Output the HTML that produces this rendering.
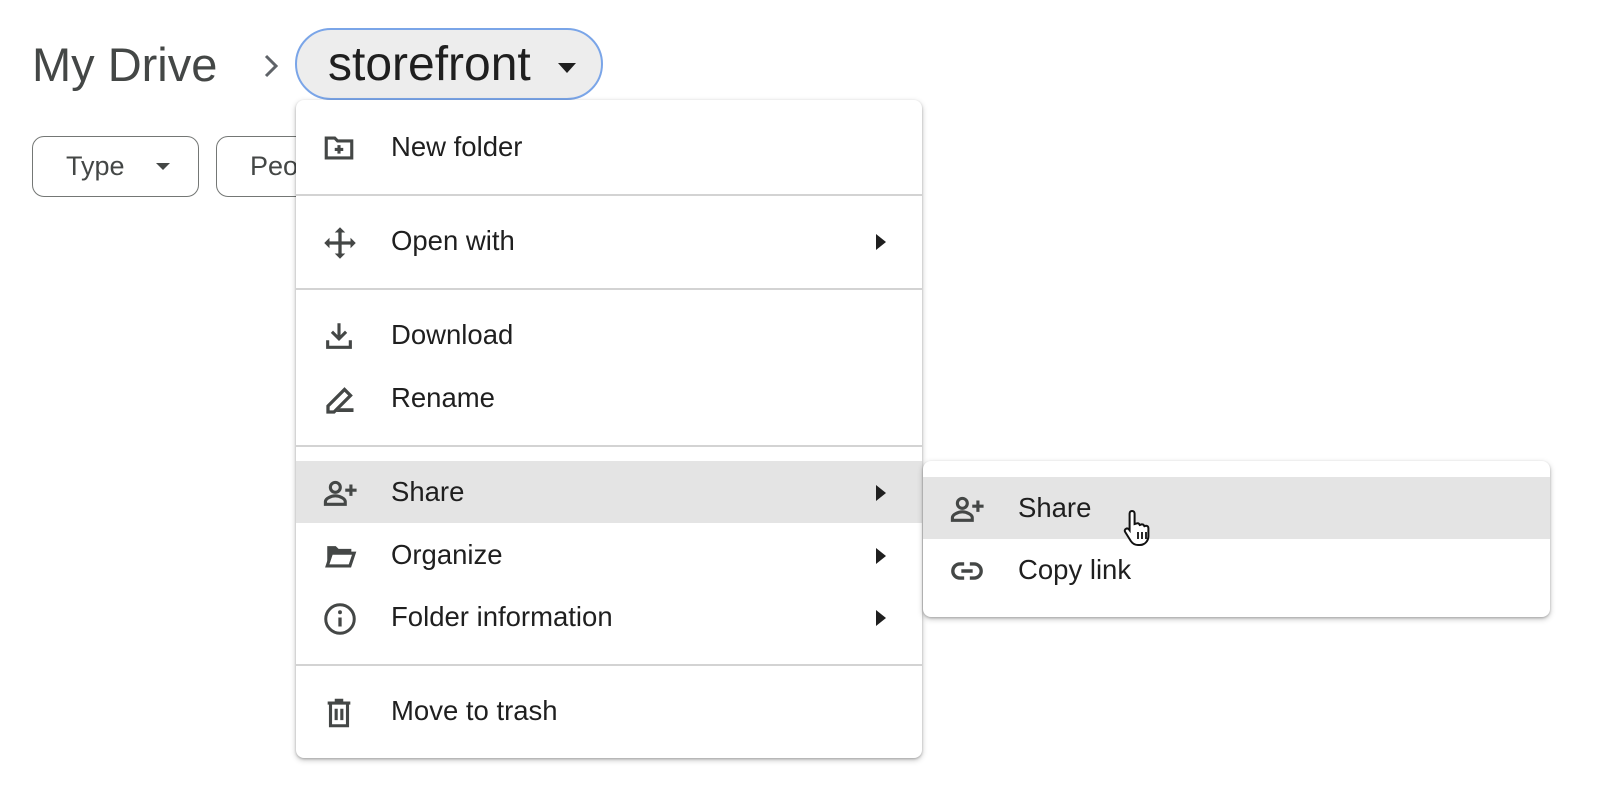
<!DOCTYPE html>
<html><head><meta charset="utf-8"><style>
body{margin:0;width:1600px;height:800px;background:#fff;font-family:"Liberation Sans",Arial,sans-serif;color:#1f1f1f;position:relative;overflow:hidden}
.abs{position:absolute}
.bc{left:32px;top:35px;font-size:47px;color:#444746;line-height:60px}
.pill{left:295px;top:28px;width:308px;height:72px;border:2px solid #7aa5e8;border-radius:36px;background:#ededed;box-sizing:border-box}
.pill span{position:absolute;left:31px;top:5px;font-size:48px;line-height:60px;color:#1f1f1f}
.chip{top:136px;height:61px;border:1.5px solid #747775;border-radius:12px;box-sizing:border-box;font-size:27px;color:#444746;line-height:58px}
.menu{background:#fff;border-radius:8px;box-shadow:0 2px 6px rgba(0,0,0,.25),0 1px 2px rgba(0,0,0,.2)}
.it{position:absolute;left:0;right:0;height:62px;font-size:27.5px;line-height:62px}
.it .t{position:absolute;left:95px}
.it svg.i{position:absolute;left:26px;top:15px}
.it .ar{position:absolute;right:36px;top:24px;width:0;height:0;border-left:10px solid #1f1f1f;border-top:8px solid transparent;border-bottom:8px solid transparent}
.hl{background:#e4e4e4}
.dv{position:absolute;left:0;right:0;height:2px;background:#d3d3d3}
</style></head><body>
<div class="abs bc">My Drive</div>
<svg class="abs" style="left:262px;top:52px" width="18" height="28" viewBox="0 0 18 28"><path d="M4 4l10 10-10 10" fill="none" stroke="#5f6368" stroke-width="3"/></svg>
<div class="abs pill"><span>storefront</span><svg class="abs" style="left:260px;top:32px" width="20" height="12"><path d="M1 1h18L10 11z" fill="#1f1f1f"/></svg></div>
<div class="abs chip" style="left:32px;width:167px"><span style="position:absolute;left:33px">Type</span><svg class="abs" style="left:122px;top:25px" width="16" height="10"><path d="M1 1h14L8 8z" fill="#444746"/></svg></div>
<div class="abs chip" style="left:216px;width:120px"><span style="position:absolute;left:33px">People</span></div>

<div class="abs menu" style="left:296px;top:100px;width:626px;height:658px">
 <div class="it" style="top:16px"><svg class="i" width="34" height="34" viewBox="0 0 24 24"><path d="M3 5h6l2 2h10v12H3z" fill="none" stroke="#444746" stroke-width="2.2"/><path d="M12 10v6M9 13h6" stroke="#444746" stroke-width="2.2"/></svg><span class="t">New folder</span></div>
 <div class="dv" style="top:94px"></div>
 <div class="it" style="top:110px"><svg class="i" width="36" height="36" viewBox="0 0 24 24"><path d="M12 1.5l-3.5 3.5h7zM12 22.5l-3.5-3.5h7zM1.5 12l3.5-3.5v7zM22.5 12l-3.5-3.5v7z" fill="#444746"/><path d="M12 4v16M4 12h16" stroke="#444746" stroke-width="2.2"/></svg><span class="t">Open with</span><i class="ar"></i></div>
 <div class="dv" style="top:188px"></div>
 <div class="it" style="top:204px"><svg class="i" width="34" height="34" viewBox="0 0 24 24"><path d="M12 3v11M7 9l5 5 5-5M4 15v5h16v-5" fill="none" stroke="#444746" stroke-width="2.2"/></svg><span class="t">Download</span></div>
 <div class="it" style="top:267px"><svg class="i" width="36" height="36" viewBox="0 0 24 24"><path d="M4 20v-4L15 5l4 4L8 20z" fill="none" stroke="#444746" stroke-width="2.2"/><path d="M12 17.5h9v2.5h-11.5z" fill="#444746"/></svg><span class="t">Rename</span></div>
 <div class="dv" style="top:345px"></div>
 <div class="it hl" style="top:361px"><svg class="i" width="38" height="34" viewBox="0 0 26 24"><circle cx="9" cy="8" r="3.5" fill="none" stroke="#444746" stroke-width="2.2"/><path d="M2 20v-2c0-2 4-4 7-4s7 2 7 4v2z" fill="none" stroke="#444746" stroke-width="2.2"/><path d="M20 6v8M16 10h8" stroke="#444746" stroke-width="2.2"/></svg><span class="t">Share</span><i class="ar"></i></div>
 <div class="it" style="top:424px"><svg class="i" width="36" height="34" viewBox="0 0 24 24"><path d="M3 5h6l2 2h9v3H7l-3 9H3z" fill="#444746"/><path d="M3 19l3-9h16l-3 9z" fill="none" stroke="#444746" stroke-width="2.2"/></svg><span class="t">Organize</span><i class="ar"></i></div>
 <div class="it" style="top:486px"><svg class="i" width="36" height="36" viewBox="0 0 24 24"><circle cx="12" cy="12" r="9.5" fill="none" stroke="#444746" stroke-width="2"/><path d="M12 11v6" stroke="#444746" stroke-width="2.2"/><circle cx="12" cy="7.5" r="1.3" fill="#444746"/></svg><span class="t">Folder information</span><i class="ar"></i></div>
 <div class="dv" style="top:564px"></div>
 <div class="it" style="top:580px"><svg class="i" width="34" height="36" viewBox="0 0 24 24"><path d="M4 5h16M9 3h6" stroke="#444746" stroke-width="2.2"/><path d="M6 5v16h12V5" fill="none" stroke="#444746" stroke-width="2.2"/><path d="M10 9v8M14 9v8" stroke="#444746" stroke-width="2.2"/></svg><span class="t">Move to trash</span></div>
</div>

<div class="abs menu" style="left:923px;top:461px;width:627px;height:156px">
 <div class="it hl" style="top:16px"><svg class="i" width="38" height="34" viewBox="0 0 26 24"><circle cx="9" cy="8" r="3.5" fill="none" stroke="#444746" stroke-width="2.2"/><path d="M2 20v-2c0-2 4-4 7-4s7 2 7 4v2z" fill="none" stroke="#444746" stroke-width="2.2"/><path d="M20 6v8M16 10h8" stroke="#444746" stroke-width="2.2"/></svg><span class="t">Share</span></div>
 <div class="it" style="top:78px"><svg class="i" width="36" height="34" viewBox="0 0 24 24"><path d="M10 7H7a5 5 0 0 0 0 10h3M14 7h3a5 5 0 0 1 0 10h-3M8 12h8" fill="none" stroke="#444746" stroke-width="2.4"/></svg><span class="t">Copy link</span></div>
</div>
<svg class="abs" style="left:1122px;top:508px" width="32" height="40" viewBox="0 0 16 20"><path d="M5 1.5c.8 0 1.3.5 1.3 1.3V8l1-.3c.6-.2 1.2 0 1.4.5l.2.3.8-.3c.6-.1 1.1.1 1.3.6l.2.3.7-.2c.7-.1 1.300.4 1.3 1.1v4c0 2.5-1.8 4.5-4.3 4.5H8c-1.5 0-2.8-.8-3.6-2L1.6 12c-.4-.6-.2-1.3.4-1.6.5-.3 1.1-.1 1.5.3l.3.4V2.8C3.8 2 4.3 1.5 5 1.5z" fill="#fff" stroke="#111" stroke-width="1"/><path d="M8 12v3.5M10 12v3.5M12 12v3.5" stroke="#111" stroke-width=".9"/></svg>
</body></html>
